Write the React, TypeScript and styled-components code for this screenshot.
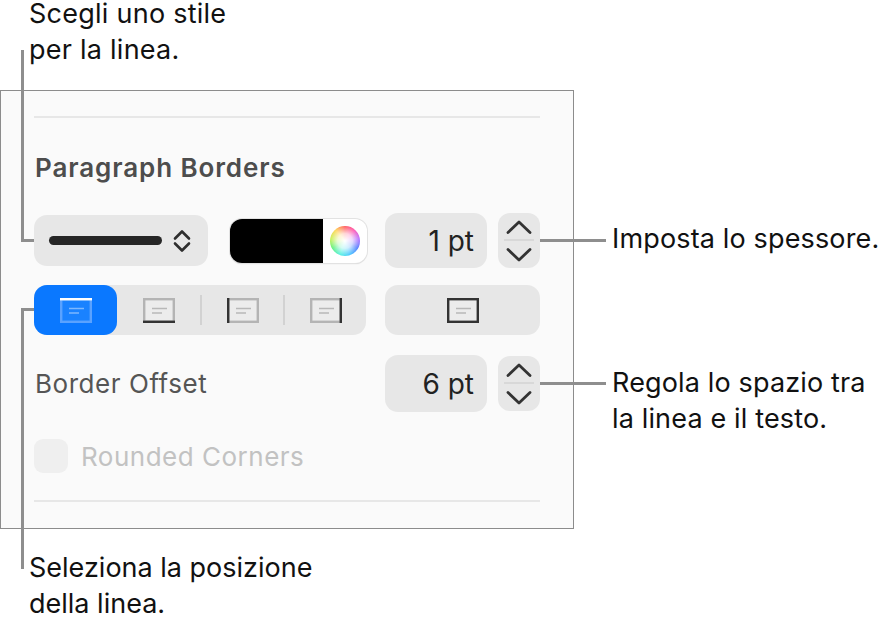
import styled, { createGlobalStyle } from "styled-components";

const GlobalStyle = createGlobalStyle`
  html, body {
    margin: 0;
    background: #fff;
  }

  body {
    font-family: Inter, "Liberation Sans", sans-serif;
  }
`;

const Stage = styled.div`
  position: relative;
  width: 888px;
  height: 622px;
  overflow: hidden;
`;

const TopCaption = styled.div`
  height: 90px;
  box-sizing: border-box;
  padding-left: 29px;
  display: flex;
  flex-direction: column;
  gap: 8px;
`;

const TopCaptionLine = styled.div`
  font-size: 27px;
  line-height: 28px;
  letter-spacing: 0.25px;
  color: #111;
`;

const CaptionText = styled.div`
  font-size: 27px;
  line-height: 36px;
  color: #111;
`;

const BottomCaption = styled(CaptionText)`
  padding: 21px 0 0 29px;
`;

const Panel = styled.div`
  width: 574px;
  height: 439px;
  box-sizing: border-box;
  border: 1px solid #8c8c8c;
  background: #fafafa;
  padding: 25px 33px 0;
  display: flex;
  flex-direction: column;
`;

const Divider = styled.div`
  height: 2px;
  background: #e7e7e7;
  flex: none;
`;

const Heading = styled.div`
  margin-top: 34px;
  height: 32px;
  font-size: 26px;
  line-height: 32px;
  font-weight: 600;
  letter-spacing: 0.9px;
  padding-left: 1px;
  color: #4d4d4d;
`;

const Row = styled.div`
  display: flex;
  align-items: center;
`;

const TopRow = styled(Row)`
  margin-top: 29px;
  height: 55px;
`;

const PositionRow = styled(Row)`
  margin-top: 17px;
  height: 50px;
`;

const OffsetRow = styled(Row)`
  margin-top: 20px;
  height: 57px;
`;

const CheckRow = styled(Row)`
  margin-top: 27px;
  height: 34px;
  gap: 13px;
`;

const LineSelect = styled.div`
  width: 174px;
  height: 51px;
  border-radius: 13px;
  background: #e7e7e7;
  display: flex;
  align-items: center;
  padding-left: 15px;
  box-sizing: border-box;
  gap: 11px;
`;

const LineSample = styled.div`
  width: 113px;
  height: 9px;
  border-radius: 5px;
  background: #262626;
`;

const Swatch = styled.div`
  width: 137px;
  height: 44px;
  margin-left: 22px;
  border-radius: 12px;
  box-sizing: border-box;
  background: #fff;
  box-shadow: 0 0 0 1px #e2e2e2, 0 1px 1px #c8c8c8;
  display: flex;
  align-items: center;
  overflow: hidden;
`;

const SwatchColor = styled.div`
  width: 93px;
  height: 100%;
  background: #000;
`;

const ColorWheel = styled.div`
  width: 30px;
  height: 30px;
  margin-left: 7px;
  border-radius: 50%;
  background:
    radial-gradient(circle, #fff 0%, rgba(255, 255, 255, 0.75) 35%, rgba(255, 255, 255, 0) 72%),
    conic-gradient(#ff5a5a, #ff4fb0, #b66cff, #4d7bff, #3fc4ff, #4ff0e0, #5cf07a, #c8f04f, #ffd34f, #ff5a5a);
`;

const ValueField = styled.div`
  width: 102px;
  height: 55px;
  margin-left: 18px;
  border-radius: 13px;
  background: #e7e7e7;
  box-sizing: border-box;
  padding-right: 13px;
  display: flex;
  align-items: center;
  justify-content: flex-end;
  font-size: 28px;
  color: #222;
`;

const OffsetField = styled(ValueField)`
  height: 57px;
  margin-left: 0;
`;

const Stepper = styled.div`
  width: 42px;
  height: 55px;
  margin-left: 11px;
  border-radius: 12px;
  background: #e7e7e7;
  position: relative;
  display: flex;
  flex-direction: column;
  align-items: center;
  justify-content: center;
  gap: 14px;
`;

const StepperRule = styled.div`
  position: absolute;
  left: 6px;
  right: 6px;
  top: 26px;
  height: 2px;
  background: #d8d8d8;
`;

const Segments = styled.div`
  width: 332px;
  height: 50px;
  border-radius: 13px;
  background: #e7e7e7;
  display: flex;
  align-items: center;
`;

const Segment = styled.div<{ $active?: boolean; $width: number }>`
  width: ${({ $width }) => $width}px;
  height: 50px;
  border-radius: 13px;
  background: ${({ $active }) => ($active ? "#0a78ff" : "transparent")};
  display: flex;
  align-items: center;
  justify-content: center;
`;

const SegmentRule = styled.div`
  width: 2px;
  height: 30px;
  background: #d2d2d2;
  flex: none;
`;

const AllBordersButton = styled.div`
  width: 155px;
  height: 50px;
  margin-left: 19px;
  border-radius: 13px;
  background: #e7e7e7;
  display: flex;
  align-items: center;
  justify-content: center;
`;

const OffsetLabel = styled.div`
  width: 351px;
  font-size: 26px;
  letter-spacing: 0.55px;
  padding-left: 1px;
  box-sizing: border-box;
  color: #555;
`;

const CheckBox = styled.div`
  width: 34px;
  height: 34px;
  border-radius: 9px;
  background: #efefef;
`;

const CheckLabel = styled.div`
  font-size: 26px;
  letter-spacing: 0.5px;
  color: #c2c2c2;
`;

const BottomDivider = styled(Divider)`
  margin-top: 27px;
`;

/* leader lines lie over the panel and the white page around it */
const Leader = styled.div`
  position: absolute;
  background: #8e8e8e;
`;

const SideCaption = styled(CaptionText)`
  position: absolute;
  left: 612px;
  white-space: nowrap;
  letter-spacing: 0.15px;
`;

const Chevrons = () => (
  <svg width="18" height="24" viewBox="0 0 18 24" fill="none" stroke="#2e2e2e" strokeWidth="2.6" strokeLinecap="round" strokeLinejoin="round">
    <path d="M2 9.5 9 2.5l7 7" />
    <path d="M2 14.5 9 21.5l7-7" />
  </svg>
);

const StepUp = () => (
  <svg width="28" height="14" viewBox="0 0 28 14" fill="none" stroke="#333" strokeWidth="2.8" strokeLinecap="round" strokeLinejoin="round">
    <path d="M3 12.5 14 2l11 10.5" />
  </svg>
);

const StepDown = () => (
  <svg width="28" height="14" viewBox="0 0 28 14" fill="none" stroke="#333" strokeWidth="2.8" strokeLinecap="round" strokeLinejoin="round">
    <path d="M3 1.5 14 12 25 1.5" />
  </svg>
);

type Edge = "top" | "bottom" | "left" | "right" | "all";

const BorderGlyph = ({ edge, active }: { edge: Edge; active?: boolean }) => {
  const faint = active ? "#5aa2ff" : "#b4b4b4";
  const strong = active ? "#ffffff" : "#333333";
  const lines = active ? "#7db8ff" : "#b8b8b8";
  const fill = active ? "#1a82ff" : "#ececec";
  return (
    <svg width="32" height="25" viewBox="0 0 32 25" fill="none" strokeWidth="2.4">
      <rect x="1.2" y="1.2" width="29.6" height="22.6" fill={fill} stroke={edge === "all" ? strong : faint} />
      <path d="M9 10.5h15M9 15h10" stroke={lines} strokeWidth="1.6" />
      {edge === "top" && <path d="M0 1.2h32" stroke={strong} />}
      {edge === "bottom" && <path d="M0 23.8h32" stroke={strong} />}
      {edge === "left" && <path d="M1.2 0v25" stroke={strong} />}
      {edge === "right" && <path d="M30.8 0v25" stroke={strong} />}
    </svg>
  );
};

const StepperControl = () => (
  <Stepper>
    <StepperRule />
    <StepUp />
    <StepDown />
  </Stepper>
);

export default function App() {
  return (
    <Stage>
      <GlobalStyle />
      <TopCaption>
        <TopCaptionLine>Scegli uno stile</TopCaptionLine>
        <TopCaptionLine>per la linea.</TopCaptionLine>
      </TopCaption>
      <Panel>
        <Divider />
        <Heading>Paragraph Borders</Heading>
        <TopRow>
          <LineSelect>
            <LineSample />
            <Chevrons />
          </LineSelect>
          <Swatch>
            <SwatchColor />
            <ColorWheel />
          </Swatch>
          <ValueField>1 pt</ValueField>
          <StepperControl />
        </TopRow>
        <PositionRow>
          <Segments>
            <Segment $active $width={83}>
              <BorderGlyph edge="top" active />
            </Segment>
            <Segment $width={83}>
              <BorderGlyph edge="bottom" />
            </Segment>
            <SegmentRule />
            <Segment $width={81}>
              <BorderGlyph edge="left" />
            </Segment>
            <SegmentRule />
            <Segment $width={81}>
              <BorderGlyph edge="right" />
            </Segment>
          </Segments>
          <AllBordersButton>
            <BorderGlyph edge="all" />
          </AllBordersButton>
        </PositionRow>
        <OffsetRow>
          <OffsetLabel>Border Offset</OffsetLabel>
          <OffsetField>6 pt</OffsetField>
          <StepperControl />
        </OffsetRow>
        <CheckRow>
          <CheckBox />
          <CheckLabel>Rounded Corners</CheckLabel>
        </CheckRow>
        <BottomDivider />
      </Panel>
      <BottomCaption>
        Seleziona la posizione
        <br />
        della linea.
      </BottomCaption>

      <Leader style={{ left: 21, top: 50, width: 3, height: 192 }} />
      <Leader style={{ left: 21, top: 239, width: 13, height: 3 }} />
      <Leader style={{ left: 21, top: 308, width: 13, height: 3 }} />
      <Leader style={{ left: 21, top: 308, width: 3, height: 261 }} />
      <Leader style={{ left: 540, top: 239, width: 66, height: 3 }} />
      <Leader style={{ left: 540, top: 382, width: 66, height: 3 }} />

      <SideCaption style={{ top: 221 }}>Imposta lo spessore.</SideCaption>
      <SideCaption style={{ top: 365 }}>
        Regola lo spazio tra
        <br />
        la linea e il testo.
      </SideCaption>
    </Stage>
  );
}
